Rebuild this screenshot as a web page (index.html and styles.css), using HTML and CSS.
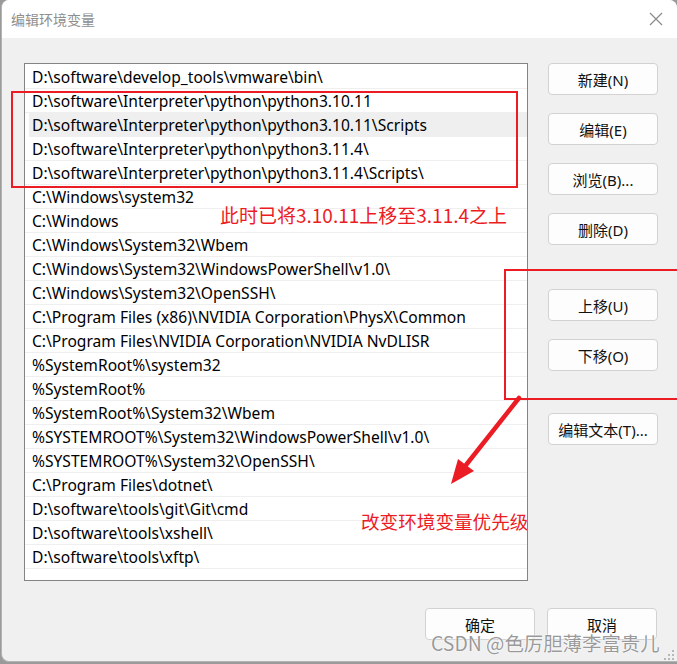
FILE: index.html
```html
<!DOCTYPE html>
<html lang="zh">
<head>
<meta charset="utf-8">
<title>编辑环境变量</title>
<link rel="stylesheet" href="styles.css">
</head>
<body>
<div class="window">
  <div class="titlebar">
    <span class="title">编辑环境变量</span>
    <svg class="close" width="14" height="14" viewBox="0 0 14 14"><path d="M1 1L13 13M13 1L1 13" stroke="#8a8a8a" stroke-width="1.2" fill="none"/></svg>
  </div>
  <div class="content">
    <div class="main">
      <div class="list">
        <div class="row">D:\software\develop_tools\vmware\bin\</div>
        <div class="row">D:\software\Interpreter\python\python3.10.11</div>
        <div class="row selected">D:\software\Interpreter\python\python3.10.11\Scripts</div>
        <div class="row">D:\software\Interpreter\python\python3.11.4\</div>
        <div class="row">D:\software\Interpreter\python\python3.11.4\Scripts\</div>
        <div class="row">C:\Windows\system32</div>
        <div class="row">C:\Windows</div>
        <div class="row">C:\Windows\System32\Wbem</div>
        <div class="row">C:\Windows\System32\WindowsPowerShell\v1.0\</div>
        <div class="row">C:\Windows\System32\OpenSSH\</div>
        <div class="row">C:\Program Files (x86)\NVIDIA Corporation\PhysX\Common</div>
        <div class="row">C:\Program Files\NVIDIA Corporation\NVIDIA NvDLISR</div>
        <div class="row">%SystemRoot%\system32</div>
        <div class="row">%SystemRoot%</div>
        <div class="row">%SystemRoot%\System32\Wbem</div>
        <div class="row">%SYSTEMROOT%\System32\WindowsPowerShell\v1.0\</div>
        <div class="row">%SYSTEMROOT%\System32\OpenSSH\</div>
        <div class="row">C:\Program Files\dotnet\</div>
        <div class="row">D:\software\tools\git\Git\cmd</div>
        <div class="row">D:\software\tools\xshell\</div>
        <div class="row">D:\software\tools\xftp\</div>
      </div>
      <div class="side">
        <button class="btn">新建(N)</button>
        <button class="btn">编辑(E)</button>
        <button class="btn">浏览(B)...</button>
        <button class="btn">删除(D)</button>
        <button class="btn group">上移(U)</button>
        <button class="btn">下移(O)</button>
        <button class="btn group2">编辑文本(T)...</button>
      </div>
    </div>
    <div class="footer">
      <button class="btn">确定</button>
      <button class="btn">取消</button>
    </div>
  </div>
</div>

<div class="mark box1"></div>
<div class="mark box2"></div>
<div class="note note1">此时已将3.10.11上移至3.11.4之上</div>
<div class="note note2">改变环境变量优先级</div>
<svg class="arrow" width="677" height="664" viewBox="0 0 677 664">
  <line x1="519" y1="398" x2="466" y2="465" stroke="#ec1c24" stroke-width="4.5" stroke-linecap="round"/>
  <polygon points="451,484 458,459 474,471" fill="#ec1c24"/>
</svg>
<svg class="grip" width="12" height="12" viewBox="0 0 12 12">
  <g fill="#b8b8b8">
    <rect x="9" y="1" width="2" height="2"/>
    <rect x="5" y="5" width="2" height="2"/><rect x="9" y="5" width="2" height="2"/>
    <rect x="1" y="9" width="2" height="2"/><rect x="5" y="9" width="2" height="2"/><rect x="9" y="9" width="2" height="2"/>
  </g>
</svg>
<div class="watermark">CSDN @色厉胆薄李富贵儿</div>
</body>
</html>
```
FILE: styles.css
```css
html, body {
  margin: 0;
  padding: 0;
}
body {
  width: 677px;
  height: 664px;
  overflow: hidden;
  background: #9a9a9a;
  font-family: "Noto Sans", "Noto Sans CJK SC", sans-serif;
  position: relative;
}
.window {
  margin-left: 1px;
  width: 676px;
  height: 662px;
  box-sizing: border-box;
  border-left: 1px solid #b4b4b4;
  border-bottom: 1px solid #b4b4b4;
  border-radius: 8px 8px 0 8px;
  overflow: hidden;
  background: #f0f0f0;
  display: flex;
  flex-direction: column;
}
.titlebar {
  height: 38px;
  flex: none;
  background: #ffffff;
  display: flex;
  align-items: center;
  justify-content: space-between;
  padding: 0 14px 0 9px;
}
.title {
  font-family: "Noto Sans CJK SC", sans-serif;
  font-size: 14px;
  color: #8f8f8f;
}
.close {
  display: block;
}
.content {
  padding: 25px 0 0 22px;
  display: flex;
  flex-direction: column;
}
.main {
  display: flex;
  align-items: flex-start;
}
.list {
  width: 504px;
  height: 518px;
  box-sizing: border-box;
  border: 1px solid #848484;
  background: #ffffff;
  padding-top: 1px;
}
.row {
  height: 24px;
  box-sizing: border-box;
  border-bottom: 1px solid #efefef;
  padding-left: 7px;
  font-size: 15.6px;
  line-height: 24px;
  color: #000000;
  white-space: nowrap;
}
.row.selected {
  background: #efefef;
  margin-left: 4px;
  padding-left: 3px;
}
.side {
  margin-left: 20px;
  display: flex;
  flex-direction: column;
  gap: 18px;
}
.btn {
  width: 110px;
  height: 32px;
  box-sizing: border-box;
  border: 1px solid #d2d2d2;
  border-radius: 4px;
  background: #fdfdfd;
  font-family: "Noto Sans", "Noto Sans CJK SC", sans-serif;
  font-size: 15px;
  color: #111111;
  padding: 0;
}
.btn.group {
  margin-top: 26px;
}
.btn.group2 {
  margin-top: 24px;
}
.footer {
  margin-top: 27px;
  display: flex;
  justify-content: flex-end;
  gap: 12px;
  padding-right: 20px;
}
.mark {
  position: absolute;
  border: 2px solid #ec1c24;
  box-sizing: border-box;
}
.box1 {
  left: 11px;
  top: 91px;
  width: 507px;
  height: 97px;
}
.box2 {
  left: 504px;
  top: 269px;
  width: 190px;
  height: 131px;
}
.note {
  position: absolute;
  color: #ec1c24;
  font-family: "Noto Sans CJK SC", sans-serif;
  font-size: 19px;
  line-height: 22px;
  white-space: nowrap;
}
.note1 {
  left: 220px;
  top: 204px;
}
.note2 {
  left: 361px;
  top: 510px;
  font-size: 18.6px;
}
.arrow {
  position: absolute;
  left: 0;
  top: 0;
  pointer-events: none;
}
.grip {
  position: absolute;
  right: 2px;
  bottom: 3px;
}
.watermark {
  position: absolute;
  left: 431px;
  top: 631px;
  font-family: "Noto Sans CJK SC", sans-serif;
  font-size: 19.4px;
  line-height: 24px;
  color: rgba(120, 120, 120, 0.75);
  text-shadow: 0 0 2px #ffffff, 0 0 1px #ffffff;
  white-space: nowrap;
}
```
